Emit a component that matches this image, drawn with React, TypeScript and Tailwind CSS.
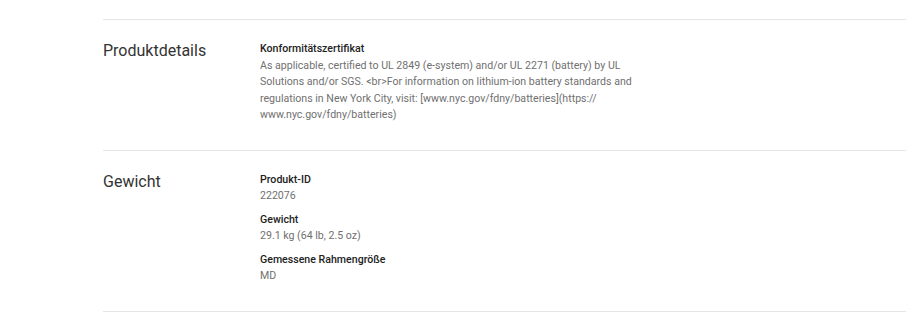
import type { ReactNode } from "react";

const font = { fontFamily: '"Roboto", "Liberation Sans", sans-serif' };

type Spec = { label: string; value: ReactNode };

const SECTIONS: { title: string; specs: Spec[] }[] = [
  {
    title: "Produktdetails",
    specs: [
      {
        label: "Konformitätszertifikat",
        value: (
          <>
            As applicable, certified to UL 2849 (e-system) and/or UL 2271 (battery) by UL
            Solutions and/or SGS. &lt;br&gt;For information on lithium-ion battery standards
            and regulations in New York City, visit: [www.nyc.gov/fdny/batteries](https://
            <wbr />
            www.nyc.gov/fdny/batteries)
          </>
        ),
      },
    ],
  },
  {
    title: "Gewicht",
    specs: [
      { label: "Produkt-ID", value: "222076" },
      { label: "Gewicht", value: "29.1 kg (64 lb, 2.5 oz)" },
      { label: "Gemessene Rahmengröße", value: "MD" },
    ],
  },
];

export default function App() {
  return (
    <div className="min-h-[323px] w-full bg-white pt-[19px] pl-[103px]" style={font}>
      {SECTIONS.map((section) => (
        <section
          key={section.title}
          className="flex border-t border-[#e6e6e6] pt-[21px] pb-[26px] last:border-b"
        >
          <h2 className="w-[157px] shrink-0 text-[16px] leading-5 text-[#333]">
            {section.title}
          </h2>
          <div className="flex flex-col gap-[7px]">
            {section.specs.map((spec) => (
              <div key={spec.label} className="text-[10.6px] leading-[16.5px]">
                <p className="font-medium text-[#222]">{spec.label}</p>
                <p className="max-w-[385px] text-[#707070]">{spec.value}</p>
              </div>
            ))}
          </div>
        </section>
      ))}
    </div>
  );
}
